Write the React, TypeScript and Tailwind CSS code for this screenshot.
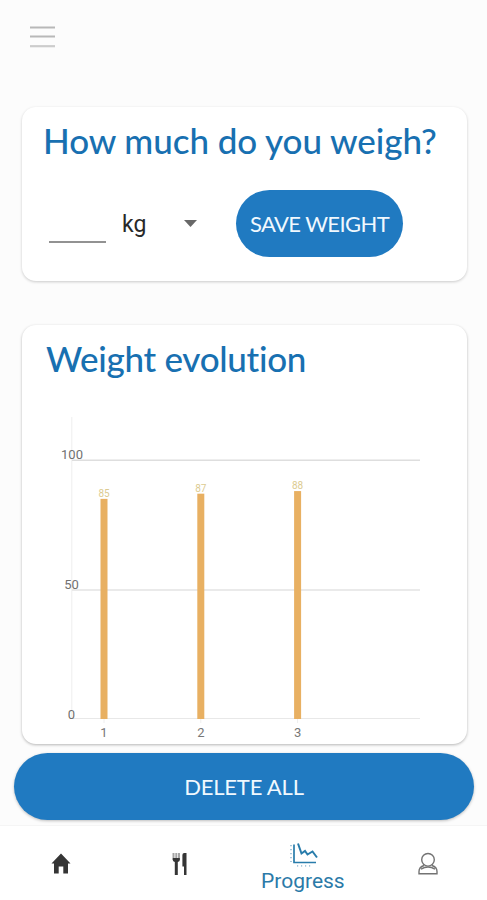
import React from "react";

type Entry = {
  label: string;
  weight: number;
};

const entries: Entry[] = [
  { label: "1", weight: 85 },
  { label: "2", weight: 87 },
  { label: "3", weight: 88 },
];

const BASE_Y = 319;

const toY = (value: number) => BASE_Y - value * 2.59;

const WeightChart = () => {
  return (
    <svg
      width="445"
      height="344"
      viewBox="0 0 445 344"
      className="block font-['Roboto',sans-serif]"
    >
      <line x1="49.8" y1="17" x2="49.8" y2="319" stroke="#eeeeee" />
      <line x1="50" y1="60.2" x2="398" y2="60.2" stroke="#dedede" strokeWidth="1.6" />
      <line x1="50" y1="190" x2="398" y2="190" stroke="#e3e3e3" strokeWidth="1.5" />
      <line x1="50" y1="318.5" x2="398" y2="318.5" stroke="#e8e8e8" />
      <g fontSize="13" fill="#707070" textAnchor="middle">
        <text x="50" y="59">100</text>
        <text x="49.5" y="189">50</text>
        <text x="49.5" y="318.5">0</text>
      </g>
      {entries.map((entry, i) => {
        const x = 82 + i * 96.8;
        const y = toY(entry.weight);
        return (
          <g key={entry.label} textAnchor="middle">
            <line x1={x} y1="319" x2={x} y2="323" stroke="#eeeeee" />
            <rect x={x - 3.5} y={y} width="7" height={BASE_Y - y} fill="#e8b062" />
            <text x={x} y={y - 2} fontSize="10" fill="#dccb91">
              {entry.weight}
            </text>
            <text x={x} y="337" fontSize="13" fill="#777777">
              {entry.label}
            </text>
          </g>
        );
      })}
    </svg>
  );
};

const HomeIcon = () => (
  <svg width="20" height="21" viewBox="0 0 20 21" fill="#353535">
    <path d="M10 0.5 19.5 10.5H17V20.5H12.3V13.5H7.7V20.5H3V10.5H0.5Z" />
  </svg>
);

const MealsIcon = () => (
  <svg width="16" height="24" viewBox="0 0 16 24">
    <path d="M1.5 1V8M4.3 1V8M7 1V8" stroke="#a5a5a5" strokeWidth="2" />
    <path d="M0.8 6H7.8V8Q7.8 9.5 5.8 10V23H2.8V10Q0.8 9.5 0.8 8Z" fill="#353535" />
    <path d="M14.5 1V23H12V14.5H10.4V3Q10.4 1 12.3 1Z" fill="#353535" />
  </svg>
);

const ProgressIcon = () => (
  <svg width="30" height="26" viewBox="0 0 30 26" fill="none">
    <path d="M6 2.5V20.5H28" stroke="#287cab" strokeWidth="1.7" />
    <path
      d="M10 1.5 13.5 11.5 17 9 19.5 12.5 24.5 9.5 29 15.5"
      stroke="#287cab"
      strokeWidth="2"
    />
    <path d="M3 3V20" stroke="#a9c8dc" strokeWidth="2" strokeDasharray="1.2 2.8" />
    <path d="M9 23.8H25" stroke="#a9c8dc" strokeWidth="1.8" strokeDasharray="1.2 2.8" />
  </svg>
);

const ProfileIcon = () => (
  <svg width="20" height="24" viewBox="0 0 20 24" fill="none" stroke="#737373" strokeWidth="1.4">
    <circle cx="10" cy="7.8" r="6.3" />
    <path d="M6 13.5C3 14.5 1 17 1 19.5V21.8H19V19.5C19 17 17 14.5 14 13.5" />
    <path d="M3 17.2Q10 12.8 17 17.2" />
  </svg>
);

const App = () => {
  return (
    <div className="flex h-[900px] w-[487px] flex-col overflow-hidden bg-[#fcfcfc] font-['Roboto',sans-serif]">
      <header className="h-[107px] shrink-0 pl-[30px] pt-[26px]">
        <button className="block" aria-label="Menu">
          <svg width="25" height="22" viewBox="0 0 25 22" stroke="#b8b8b8" strokeWidth="1.8">
            <path d="M0 1.5H25M0 10.5H25" />
            <path d="M0 20.2H25" stroke="#cccccc" strokeWidth="2.2" />
          </svg>
        </button>
      </header>

      <section className="ml-[22px] h-[174px] w-[445px] shrink-0 rounded-[14px] bg-white shadow-[0_1px_3px_rgba(0,0,0,0.2)]">
        <h1 className="whitespace-nowrap pl-[21px] pt-[11px] font-['Lato',sans-serif] text-[35px] font-medium leading-[44px] tracking-[-0.07px] text-[#1870b1]">
          How much do you weigh?
        </h1>
        <div className="mt-[28px] flex h-[67px] items-center">
          <div className="ml-[27px] mt-[37px] h-[1.5px] w-[57px] bg-[#929292]" />
          <span className="ml-4 w-[62px] pt-[3px] text-[23px] text-[#292929]">kg</span>
          <svg width="13" height="7" viewBox="0 0 13 7" fill="#686868">
            <path d="M0 0H13L6.5 7Z" />
          </svg>
          <button className="ml-[39px] h-[67px] w-[167px] whitespace-nowrap rounded-full bg-[#207ac1] font-['Lato',sans-serif] text-[22px] tracking-[-0.6px] text-[#f0f8fe]">
            SAVE WEIGHT
          </button>
        </div>
      </section>

      <section className="ml-[22px] mt-11 h-[419px] w-[445px] shrink-0 rounded-[14px] bg-white shadow-[0_1px_3px_rgba(0,0,0,0.28)]">
        <h2 className="h-[75px] whitespace-nowrap pl-6 pt-[11px] font-['Lato',sans-serif] text-[35px] font-medium leading-[44px] tracking-[-0.3px] text-[#1870b1] [font-variant-ligatures:none]">
          Weight evolution
        </h2>
        <WeightChart />
      </section>

      <button className="ml-[14px] mt-[9px] h-[67px] w-[460px] shrink-0 rounded-full bg-[#207ac1] font-['Lato',sans-serif] text-[22px] tracking-[-0.2px] text-[#f0f8fe] shadow-[0_1px_3px_rgba(0,0,0,0.25)]">
        DELETE ALL
      </button>

      <nav className="mt-[5px] grid h-[75px] grid-cols-4 border-t border-[#f5f5f5] bg-white">
        <div className="flex justify-center pt-[27px]">
          <HomeIcon />
        </div>
        <div className="flex justify-center pr-1.5 pt-[26px]">
          <MealsIcon />
        </div>
        <div className="flex flex-col items-center pr-[3px] pt-4">
          <ProgressIcon />
          <span className="text-[21px] leading-[26px] text-[#2b7aa8]">Progress</span>
        </div>
        <div className="flex justify-center pl-1 pt-[26px]">
          <ProfileIcon />
        </div>
      </nav>
    </div>
  );
};

export default App;
